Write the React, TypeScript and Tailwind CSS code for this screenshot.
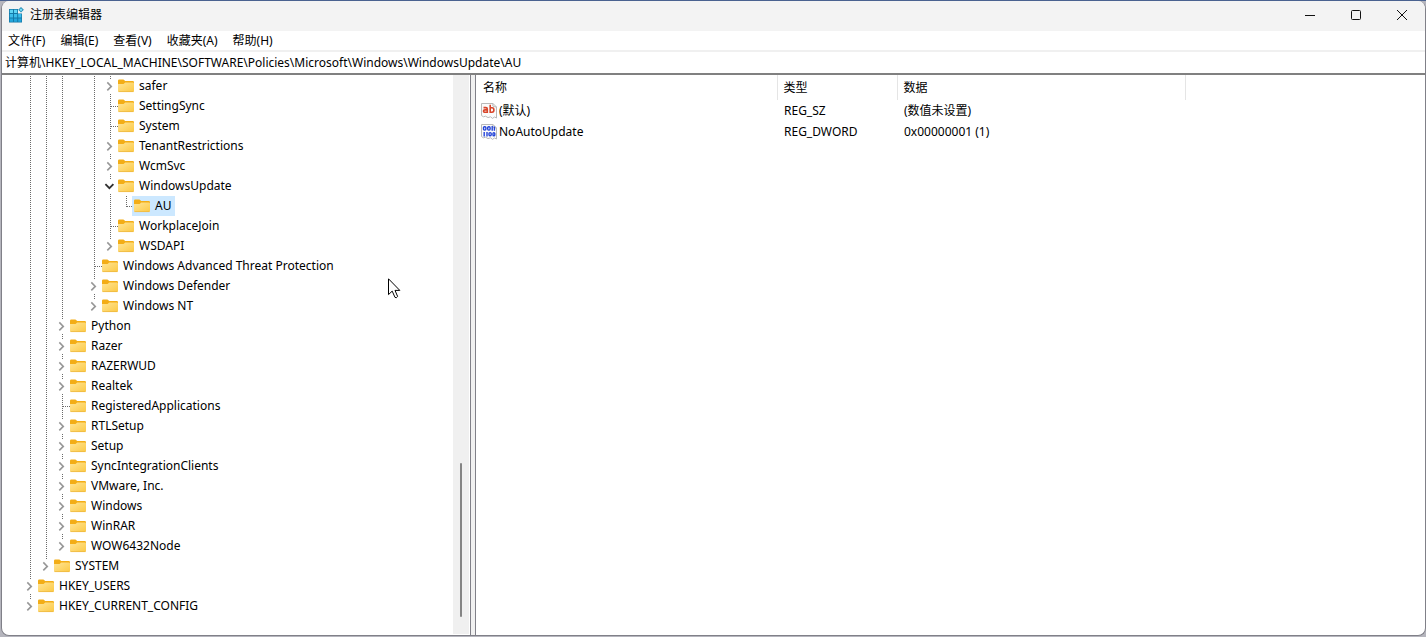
import React from "react";

type NodeKind = "closed" | "open" | "leaf";

interface TreeRow {
  name: string;
  depth: number;
  kind: NodeKind;
  last?: boolean;
  selected?: boolean;
}

const rows: TreeRow[] = [
  { name: "safer", depth: 5, kind: "closed" },
  { name: "SettingSync", depth: 5, kind: "leaf" },
  { name: "System", depth: 5, kind: "leaf" },
  { name: "TenantRestrictions", depth: 5, kind: "closed" },
  { name: "WcmSvc", depth: 5, kind: "closed" },
  { name: "WindowsUpdate", depth: 5, kind: "open" },
  { name: "AU", depth: 6, kind: "leaf", last: true, selected: true },
  { name: "WorkplaceJoin", depth: 5, kind: "leaf" },
  { name: "WSDAPI", depth: 5, kind: "closed", last: true },
  { name: "Windows Advanced Threat Protection", depth: 4, kind: "leaf" },
  { name: "Windows Defender", depth: 4, kind: "closed" },
  { name: "Windows NT", depth: 4, kind: "closed", last: true },
  { name: "Python", depth: 2, kind: "closed" },
  { name: "Razer", depth: 2, kind: "closed" },
  { name: "RAZERWUD", depth: 2, kind: "closed" },
  { name: "Realtek", depth: 2, kind: "closed" },
  { name: "RegisteredApplications", depth: 2, kind: "leaf" },
  { name: "RTLSetup", depth: 2, kind: "closed" },
  { name: "Setup", depth: 2, kind: "closed" },
  { name: "SyncIntegrationClients", depth: 2, kind: "closed" },
  { name: "VMware, Inc.", depth: 2, kind: "closed" },
  { name: "Windows", depth: 2, kind: "closed" },
  { name: "WinRAR", depth: 2, kind: "closed" },
  { name: "WOW6432Node", depth: 2, kind: "closed", last: true },
  { name: "SYSTEM", depth: 1, kind: "closed", last: true },
  { name: "HKEY_USERS", depth: 0, kind: "closed" },
  { name: "HKEY_CURRENT_CONFIG", depth: 0, kind: "closed", last: true },
];

const menus = ["文件(F)", "编辑(E)", "查看(V)", "收藏夹(A)", "帮助(H)"];

const values = [
  { name: "(默认)", type: "REG_SZ", data: "(数值未设置)", binary: false },
  { name: "NoAutoUpdate", type: "REG_DWORD", data: "0x00000001 (1)", binary: true },
];

const dotted = { stroke: "#6b6b6b", strokeDasharray: "1 1", shapeRendering: "crispEdges" as const };

/* The key above level 3 is the last of its siblings, so that column has no line. */
function Guide({ level }: { level: number }) {
  return (
    <svg className="h-5 w-4 shrink-0" viewBox="0 0 16 20" aria-hidden="true">
      {level !== 3 && <path d="M8.5 0V20" {...dotted} />}
    </svg>
  );
}

function Joint({ kind, last }: { kind: NodeKind; last?: boolean }) {
  return (
    <svg className="h-5 w-4 shrink-0" viewBox="0 0 16 20" fill="none" aria-hidden="true">
      {kind === "leaf" ? (
        <>
          <path d={last ? "M8.5 0V11" : "M8.5 0V20"} {...dotted} />
          <path d="M9 10.5H16" {...dotted} />
        </>
      ) : (
        <>
          <path d="M8.5 0V3" {...dotted} />
          {!last && <path d="M8.5 18V20" {...dotted} />}
        </>
      )}
      {kind === "closed" && <path d="M5.3 6.4L9.3 10.4L5.3 14.4" stroke="#979797" strokeWidth="1.6" />}
      {kind === "open" && <path d="M3.4 8.2L7.4 12.2L11.4 8.2" stroke="#303030" strokeWidth="1.8" />}
    </svg>
  );
}

function Folder() {
  return (
    <svg className="h-4 w-4 shrink-0" viewBox="0 0 16 16" aria-hidden="true">
      <defs>
        <linearGradient id="folderFace" x1="0" y1="0" x2="1" y2="1">
          <stop offset="0" stopColor="#ffe596" />
          <stop offset="1" stopColor="#fcc945" />
        </linearGradient>
      </defs>
      <path d="M0 2.8Q0 1.5 1.2 1.5H5.4L7.3 3H14.8Q16 3 16 4.2V8H0Z" fill="#f3ad16" />
      <path d="M0 6H5.6L7.2 4.4H15Q16 4.4 16 5.4V12.8Q16 14 14.8 14H1.2Q0 14 0 12.8Z" fill="url(#folderFace)" />
      <path d="M0.5 13.6H15.5" stroke="#edb53d" strokeWidth="0.7" />
    </svg>
  );
}

function RegeditLogo() {
  return (
    <svg className="h-4 w-4 shrink-0" viewBox="0 0 16 16" aria-hidden="true">
      <path d="M1 2H10V6.4H14V15.5H1Z" fill="#1479a8" />
      <path d="M1.8 2.8H5V6H1.8ZM6 2.8H9.2V6H6Z" fill="#5fd3f3" />
      <path d="M1.8 7H5V10.4H1.8ZM6 7H9.2V10.4H6ZM10.2 7H13.3V10.4H10.2Z" fill="#3dbdea" />
      <path d="M1.8 11.4H5V14.8H1.8ZM6 11.4H9.2V14.8H6ZM10.2 11.4H13.3V14.8H10.2Z" fill="#24a6dc" />
      <path d="M13 0L15.8 2.8L13 5.6L10.2 2.8Z" fill="#2288b4" />
      <path d="M13 1.2L14.6 2.8L13 4.4L11.4 2.8Z" fill="#79dcf6" />
    </svg>
  );
}

function ValueIcon({ binary }: { binary: boolean }) {
  return (
    <svg className="h-4 w-4 shrink-0" viewBox="0 0 16 16" fill="none" aria-hidden="true">
      <path
        d="M0.5 0.5H12L15.5 4V15L13.5 14L11.5 15.4L9.5 13.8L7 14.6L4.5 13.2L2.5 13.8L0.5 12.6Z"
        fill="#fbfbfb"
        stroke="#b9b9b9"
      />
      <path d="M12 0.5L11.8 3L13.2 3.6L15.5 4" stroke="#b9b9b9" />
      {binary ? (
        <g stroke="#2444d8" strokeWidth="1.4">
          <rect x="2.5" y="2.7" width="2.4" height="3.4" rx="1" />
          <rect x="6.7" y="2.7" width="2.4" height="3.4" rx="1" />
          <path d="M11.2 2V6.8M13.4 2.6V6.8" />
          <path d="M3.2 8V12.4M6 8V12.4" />
          <rect x="8" y="8.6" width="2.2" height="3.2" rx="1" />
          <rect x="12" y="8.6" width="1.8" height="3.2" rx="0.9" />
        </g>
      ) : (
        <g stroke="#d8452a" strokeWidth="1.6">
          <path d="M2.5 4.6H4.8Q6.3 4.6 6.3 6V10M6.3 6.9H4Q2.5 6.9 2.5 8.1T3.8 9.3H6.3" />
          <path d="M9.2 1.8V10M9.2 4.8H11Q12.9 4.8 12.9 7T11 9.2H9.2" />
        </g>
      )}
    </svg>
  );
}

function Caption({ label, children }: { label: string; children: React.ReactNode }) {
  return (
    <button type="button" aria-label={label} className="flex h-full w-[46px] items-center justify-center">
      <svg className="h-3 w-3" viewBox="0 0 12 12" fill="none" stroke="#111111" aria-hidden="true">
        {children}
      </svg>
    </button>
  );
}

export default function App() {
  return (
    <div className="h-screen overflow-hidden border-t border-[#4a6290] bg-[#b5b5bd] pb-px pl-px font-['Noto_Sans','Noto_Sans_CJK_SC',sans-serif] text-[12px] text-black">
      <div className="flex h-full flex-col overflow-hidden rounded-lg border-x border-b border-[#808088] bg-white">
        <header className="flex h-[30px] shrink-0 items-center bg-[#f3f3f3] pb-0.5 pl-[6px]">
          <RegeditLogo />
          <h1 className="ml-[6px] flex-1">注册表编辑器</h1>
          <Caption label="最小化">
            <path d="M1 6.5H11" />
          </Caption>
          <Caption label="最大化">
            <rect x="1.5" y="1.5" width="9" height="9" rx="1" />
          </Caption>
          <Caption label="关闭">
            <path d="M1 1L11 11M11 1L1 11" />
          </Caption>
        </header>

        <nav className="flex h-[19px] shrink-0 items-center gap-[15px] pt-px pl-[6px]">
          {menus.map((m) => (
            <button type="button" key={m} className="leading-[18px]">
              {m}
            </button>
          ))}
        </nav>

        <div className="flex h-[25px] shrink-0 border-t-2 border-b-2 border-t-[#f0f0f0] border-b-[#808080]">
          <input
            type="text"
            aria-label="地址"
            className="w-full bg-white pl-[3px] outline-none"
            defaultValue="计算机\HKEY_LOCAL_MACHINE\SOFTWARE\Policies\Microsoft\Windows\WindowsUpdate\AU"
          />
        </div>

        <main className="flex min-h-0 flex-1">
          <section className="flex w-[469px] shrink-0 border-r border-[#808088]" aria-label="注册表项">
            <ul className="min-w-0 flex-1 overflow-hidden pt-px pl-5">
              {rows.map((r) => (
                <li key={r.name} className="flex h-5 items-center">
                  {Array.from({ length: r.depth }, (_, level) => (
                    <Guide key={level} level={level} />
                  ))}
                  <Joint kind={r.kind} last={r.last} />
                  <button
                    type="button"
                    className={
                      r.selected
                        ? "-ml-0.5 flex h-5 items-center gap-[5px] bg-[#cce8ff] pr-1 pl-0.5"
                        : "flex h-5 items-center gap-[5px]"
                    }
                  >
                    <Folder />
                    <span className="whitespace-nowrap">{r.name}</span>
                  </button>
                </li>
              ))}
            </ul>
            <div className="mr-px mb-px flex w-4 shrink-0 flex-col items-center justify-end bg-[#f0f0f0] pb-[17px]">
              <div className="h-[154px] w-0.5 rounded-full bg-[#858585]" />
            </div>
          </section>

          <div className="w-[5px] shrink-0 border-r border-[#808088] bg-[#f0f0f0]" />

          <section className="min-w-0 flex-1 pl-px" aria-label="值">
            <table className="w-full table-fixed border-collapse text-left">
              <colgroup>
                <col className="w-[300px]" />
                <col className="w-[120px]" />
                <col className="w-[288px]" />
                <col />
              </colgroup>
              <thead>
                <tr className="h-[25px]">
                  <th className="border-r border-[#e5e5e5] p-0 pl-[6px] font-normal">名称</th>
                  <th className="border-r border-[#e5e5e5] p-0 pl-[6px] font-normal">类型</th>
                  <th className="border-r border-[#e5e5e5] p-0 pl-[6px] font-normal">数据</th>
                  <td />
                </tr>
              </thead>
              <tbody>
                {values.map((v) => (
                  <tr key={v.name} className="h-[21px]">
                    <td className="p-0 pl-1">
                      <div className="flex items-center gap-0.5">
                        <ValueIcon binary={v.binary} />
                        <span>{v.name}</span>
                      </div>
                    </td>
                    <td className="p-0 pl-[7px]">{v.type}</td>
                    <td className="p-0 pl-[7px]">{v.data}</td>
                    <td />
                  </tr>
                ))}
              </tbody>
            </table>
          </section>
        </main>
      </div>

      <svg className="pointer-events-none absolute top-[278px] left-[388px] h-[22px] w-[14px]" viewBox="0 0 14 22" aria-hidden="true">
        <path
          d="M0.5 0.8V16.6L4.2 13.1L7 19.4Q8.4 20.6 9.6 18.4L7 12.4H11.8Z"
          fill="#ffffff"
          stroke="#000000"
        />
      </svg>
    </div>
  );
}
